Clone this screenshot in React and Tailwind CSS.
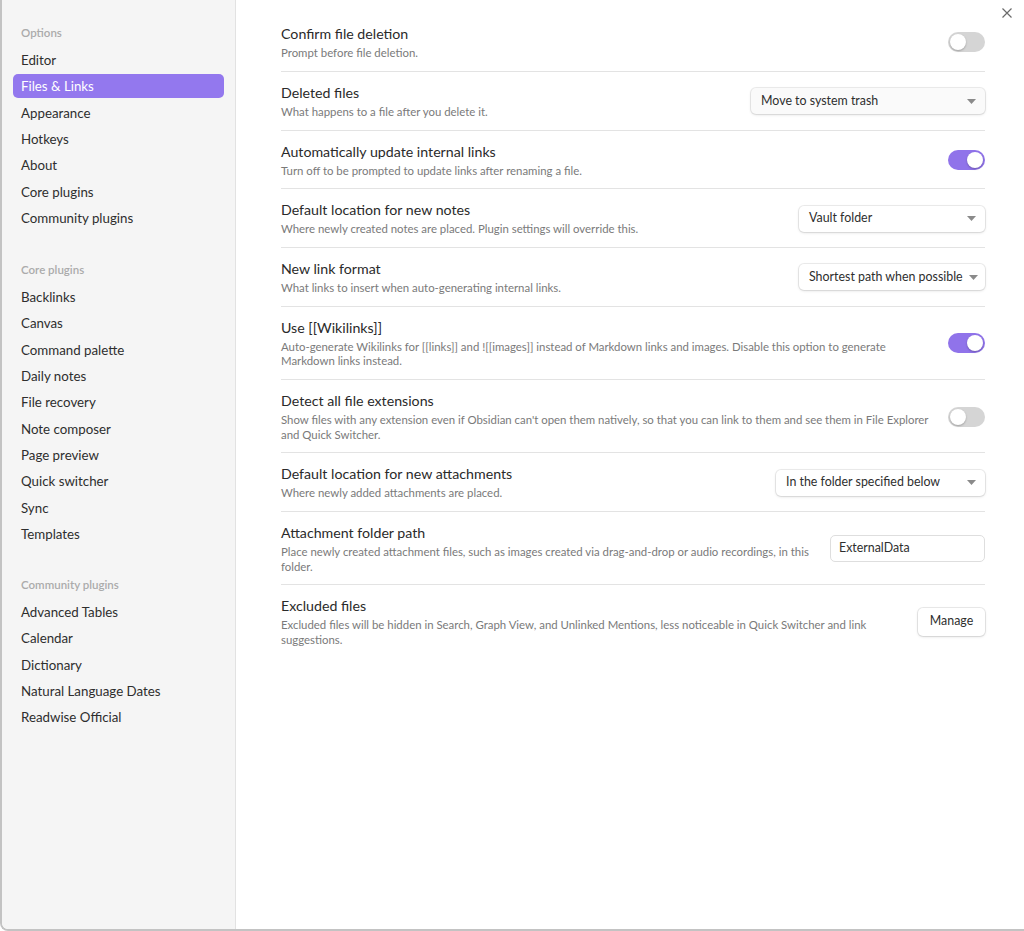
import React from "react";

const sidebar = [
  { title: "Options", gap: "", items: ["Editor", "Files & Links", "Appearance", "Hotkeys", "About", "Core plugins", "Community plugins"] },
  {
    title: "Core plugins",
    gap: "mt-[30px]",
    items: ["Backlinks", "Canvas", "Command palette", "Daily notes", "File recovery", "Note composer", "Page preview", "Quick switcher", "Sync", "Templates"],
  },
  { title: "Community plugins", gap: "mt-[29px]", items: ["Advanced Tables", "Calendar", "Dictionary", "Natural Language Dates", "Readwise Official"] },
];

function Toggle({ on }) {
  return (
    <div
      className={`relative h-[20px] w-[37px] rounded-full ${
        on ? "bg-[#9073ea]" : "bg-[#d5d5d5]"
      }`}
    >
      <div
        className={`absolute top-[2px] h-[16px] w-[16px] rounded-full bg-white shadow-[0_1px_2px_rgba(0,0,0,0.25)] ${
          on ? "right-[2px]" : "left-[2px]"
        }`}
      />
    </div>
  );
}

function Dropdown({ label, width, tint }) {
  return (
    <div
      className={`flex h-[26px] items-center justify-between gap-[6px] whitespace-nowrap rounded-[5px] pl-[10px] pr-[9px] text-[12.4px] text-[#2e2e2e] shadow-[0_0_0_1px_rgba(0,0,0,0.07),0_1px_3px_rgba(0,0,0,0.12)] ${
        tint ? "bg-[#fafafa]" : "bg-white"
      } ${width}`}
    >
      <span>{label}</span>
      <svg width="9" height="5" viewBox="0 0 9 5" className="shrink-0">
        <path d="M0 0 L9 0 L4.5 5 Z" fill="#8a8a8a" />
      </svg>
    </div>
  );
}

function Row({ title, desc, control, last }) {
  return (
    <div
      className={`flex items-center justify-between pt-[11px] pb-[10.25px] ${
        last ? "" : "border-b border-[#e3e3e3]"
      }`}
    >
      <div className="min-w-0 flex-1 pr-[16px]">
        <div className="text-[14.2px] leading-[20px] text-[#2a2a2a]">{title}</div>
        <div className="mt-[2px] whitespace-nowrap text-[11.4px] leading-[14.5px] text-[#7a7a7a]">{desc}</div>
      </div>
      <div className="flex shrink-0 justify-end">{control}</div>
    </div>
  );
}

export default function App() {
  return (
    <div
      className="h-[931px] w-[1024px] overflow-hidden bg-white"
      style={{ fontFamily: 'Lato, "Open Sans", sans-serif' }}
    >
      <div className="flex h-[931px] overflow-hidden rounded-bl-[8px] border-b-2 border-l-2 border-[#c3c3c3]">
        <aside className="w-[234px] shrink-0 border-r border-[#e2e2e2] bg-[#f5f5f5] px-[11px] pt-[23px]">
          {sidebar.map((sec) => (
            <div key={sec.title} className={sec.gap}>
              <div className="mb-[5px] h-[20px] pl-[8px] text-[11.5px] font-semibold leading-[20px] text-[#ababab]">
                {sec.title}
              </div>
              {sec.items.map((it) => (
                <div
                  key={it}
                  className={`mb-[2.33px] h-[24px] rounded-[5px] pl-[8px] text-[13.3px] leading-[24px] ${
                    it === "Files & Links" ? "bg-[#9378ee] text-white" : "text-[#2e2e2e]"
                  }`}
                >
                  {it}
                </div>
              ))}
            </div>
          ))}
        </aside>

        <main className="relative min-w-0 flex-1 overflow-hidden pl-[45px] pr-[39px] pt-[13px]">
          <button className="absolute right-[10px] top-[6px] flex h-[14px] w-[14px] items-center justify-center text-[#6a6a6a]">
            <svg width="10" height="10" viewBox="0 0 10 10" stroke="currentColor" strokeWidth="1.2">
              <path d="M0.5 0.5 L9.5 9.5 M9.5 0.5 L0.5 9.5" />
            </svg>
          </button>

          <Row title="Confirm file deletion" desc="Prompt before file deletion." control={<Toggle on={false} />} />
          <Row
            title="Deleted files"
            desc="What happens to a file after you delete it."
            control={<Dropdown label="Move to system trash" width="w-[234px]" tint />}
          />
          <Row
            title="Automatically update internal links"
            desc="Turn off to be prompted to update links after renaming a file."
            control={<Toggle on />}
          />
          <Row
            title="Default location for new notes"
            desc="Where newly created notes are placed. Plugin settings will override this."
            control={<Dropdown label="Vault folder" width="w-[186px]" />}
          />
          <Row
            title="New link format"
            desc="What links to insert when auto-generating internal links."
            control={<Dropdown label="Shortest path when possible" width="w-[186px]" />}
          />
          <Row
            title="Use [[Wikilinks]]"
            desc={
              <>
                Auto-generate Wikilinks for [[links]] and ![[images]] instead of Markdown links and images. Disable this option to generate
                <br />
                Markdown links instead.
              </>
            }
            control={<Toggle on />}
          />
          <Row
            title="Detect all file extensions"
            desc={
              <>
                Show files with any extension even if Obsidian can't open them natively, so that you can link to them and see them in File Explorer
                <br />
                and Quick Switcher.
              </>
            }
            control={<Toggle on={false} />}
          />
          <Row
            title="Default location for new attachments"
            desc="Where newly added attachments are placed."
            control={<Dropdown label="In the folder specified below" width="w-[209px]" />}
          />
          <Row
            title="Attachment folder path"
            desc={
              <>
                Place newly created attachment files, such as images created via drag-and-drop or audio recordings, in this
                <br />
                folder.
              </>
            }
            control={
              <div className="flex h-[27px] w-[155px] items-center rounded-[5px] border border-[#dedede] bg-white pl-[8px] text-[12.4px] text-[#2e2e2e]">
                ExternalData
              </div>
            }
          />
          <Row
            last
            title="Excluded files"
            desc={
              <>
                Excluded files will be hidden in Search, Graph View, and Unlinked Mentions, less noticeable in Quick Switcher and link
                <br />
                suggestions.
              </>
            }
            control={
              <div className="flex h-[28px] w-[67px] items-center justify-center rounded-[5px] bg-white text-[12.4px] text-[#2e2e2e] shadow-[0_0_0_1px_rgba(0,0,0,0.08),0_1px_3px_rgba(0,0,0,0.12)]">
                Manage
              </div>
            }
          />
        </main>
      </div>
    </div>
  );
}
